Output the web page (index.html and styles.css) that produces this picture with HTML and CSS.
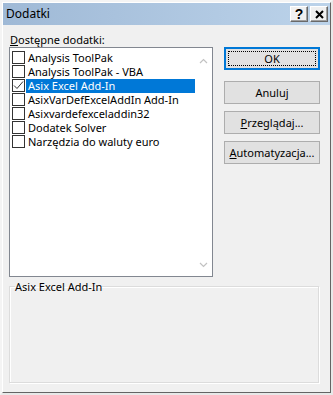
FILE: index.html
```html
<!DOCTYPE html>
<html lang="pl">
<head>
<meta charset="utf-8">
<title>Dodatki</title>
<link rel="stylesheet" href="styles.css">
</head>
<body>
<div class="window">
  <div class="frame">
    <div class="titlebar">
      <span class="title">Dodatki</span>
      <div class="caption-btns">
        <span class="cap cap-help">?</span>
        <span class="cap cap-close">
          <svg width="9" height="9" viewBox="0 0 9 9"><path d="M1 1 L8 8 M8 1 L1 8" stroke="#000" stroke-width="2" fill="none"/></svg>
        </span>
      </div>
    </div>
    <div class="body">
      <div class="top">
        <div class="left">
          <div class="label"><span class="ul">D</span>ostępne dodatki:</div>
          <div class="listbox">
            <ul class="items">
              <li class="item"><span class="cb"></span><span class="txt">Analysis ToolPak</span></li>
              <li class="item"><span class="cb"></span><span class="txt">Analysis ToolPak - VBA</span></li>
              <li class="item selected"><span class="cb"><svg width="11" height="11" viewBox="0 0 11 11"><path d="M1 5.5 L4 8.5 L10 1.5" stroke="#333" stroke-width="1" fill="none"/></svg></span><span class="txt">Asix Excel Add-In</span></li>
              <li class="item"><span class="cb"></span><span class="txt">AsixVarDefExcelAddIn Add-In</span></li>
              <li class="item"><span class="cb"></span><span class="txt">Asixvardefexceladdin32</span></li>
              <li class="item"><span class="cb"></span><span class="txt">Dodatek Solver</span></li>
              <li class="item"><span class="cb"></span><span class="txt">Narzędzia do waluty euro</span></li>
            </ul>
            <div class="scroll">
              <svg width="9" height="6" viewBox="0 0 9 6"><path d="M1 5 L4.5 1.5 L8 5" stroke="#c2c2c2" stroke-width="1.2" fill="none"/></svg>
              <svg width="9" height="6" viewBox="0 0 9 6"><path d="M1 1 L4.5 4.5 L8 1" stroke="#c2c2c2" stroke-width="1.2" fill="none"/></svg>
            </div>
          </div>
        </div>
        <div class="buttons">
          <div class="btn btn-default"><span class="focus">OK</span></div>
          <div class="btn btn-cancel">Anuluj</div>
          <div class="btn btn-browse"><span class="ul">P</span>rzeglądaj...</div>
          <div class="btn btn-auto"><span class="ul">A</span>utomatyzacja...</div>
        </div>
      </div>
      <fieldset class="group">
        <legend class="group-label">Asix Excel Add-In</legend>
      </fieldset>
    </div>
  </div>
</div>
</body>
</html>
```

FILE: styles.css
```css
html, body {
  margin: 0;
  padding: 0;
  background: #f0f0f0;
}

body {
  font-family: "Noto Sans", "Liberation Sans", sans-serif;
  font-size: 11px;
  color: #000;
}

.window {
  width: 333px;
  height: 395px;
  box-sizing: border-box;
  border: 2px solid;
  border-color: #f4f4f4 #e8e8e8 #e8e8e8 #f4f4f4;
  background: #f0f0f0;
}

.frame {
  height: 100%;
  box-sizing: border-box;
  border: 1px solid;
  border-color: #ffffff #646464 #646464 #ffffff;
  display: flex;
  flex-direction: column;
}

.titlebar {
  height: 22px;
  flex: none;
  display: flex;
  align-items: center;
  justify-content: space-between;
  background: linear-gradient(to right, #9fb9d6, #bcd3ea);
  padding: 0 2px 0 3px;
}

.title {
  font-size: 12px;
  line-height: 16px;
}

.caption-btns {
  display: flex;
  gap: 2px;
}

.cap {
  width: 18px;
  height: 16px;
  box-sizing: border-box;
  background: #f0f0f0;
  border: 1px solid;
  border-color: #ffffff #696969 #696969 #ffffff;
  box-shadow: inset -1px -1px 0 #a0a0a0;
  display: flex;
  align-items: center;
  justify-content: center;
  font-family: "Liberation Sans", sans-serif;
  font-weight: bold;
  font-size: 14px;
  line-height: 14px;
}

.body {
  flex: 1;
  display: flex;
  flex-direction: column;
  padding: 0 10px 0 6px;
}

.top {
  display: flex;
  gap: 11px;
}

.left {
  width: 204px;
  display: flex;
  flex-direction: column;
}

.label {
  margin-top: 7px;
  height: 15px;
  line-height: 15px;
  padding-left: 1px;
}

.ul {
  text-decoration: underline;
}

.listbox {
  height: 230px;
  box-sizing: border-box;
  border: 1px solid #828790;
  background: #ffffff;
  display: flex;
}

.items {
  list-style: none;
  margin: 0;
  padding: 3px 0 0 2px;
  flex: 1;
}

.item {
  display: flex;
  align-items: flex-start;
  height: 14px;
}

.cb {
  width: 13px;
  height: 13px;
  box-sizing: border-box;
  border: 1px solid #333333;
  background: #fff;
  flex: none;
  display: flex;
  align-items: center;
  justify-content: center;
}

.txt {
  margin-left: 1px;
  padding-left: 2px;
  height: 14px;
  line-height: 14px;
  flex: 1;
  white-space: nowrap;
}

.selected .txt {
  background: #0078d7;
  color: #fff;
}

.scroll {
  width: 17px;
  flex: none;
  display: flex;
  flex-direction: column;
  justify-content: space-between;
  align-items: center;
  padding: 10px 0 8px;
  box-sizing: border-box;
}

.buttons {
  width: 96px;
  padding-top: 22px;
  display: flex;
  flex-direction: column;
}

.btn {
  height: 23px;
  box-sizing: border-box;
  background: #e1e1e1;
  border: 1px solid #adadad;
  display: flex;
  align-items: center;
  justify-content: center;
  line-height: 15px;
}

.btn-default {
  border-color: #0078d7;
  box-shadow: inset 0 0 0 1px #0078d7;
  padding: 3px;
}

.focus {
  flex: 1;
  align-self: stretch;
  display: flex;
  align-items: center;
  justify-content: center;
  outline: 1px dotted #000;
  outline-offset: -1px;
}

.btn-cancel {
  margin-top: 11px;
}

.btn-browse {
  margin-top: 7px;
}

.btn-auto {
  margin-top: 7px;
}

.group {
  margin: 2px 1px 0 0;
  padding: 0 5px;
  height: 104px;
  box-sizing: border-box;
  border: 1px solid #dcdcdc;
  box-shadow: inset 1px 1px 0 #ffffff, 1px 1px 0 #ffffff;
  min-width: 0;
}

.group-label {
  padding: 0;
  line-height: 15px;
}
```
